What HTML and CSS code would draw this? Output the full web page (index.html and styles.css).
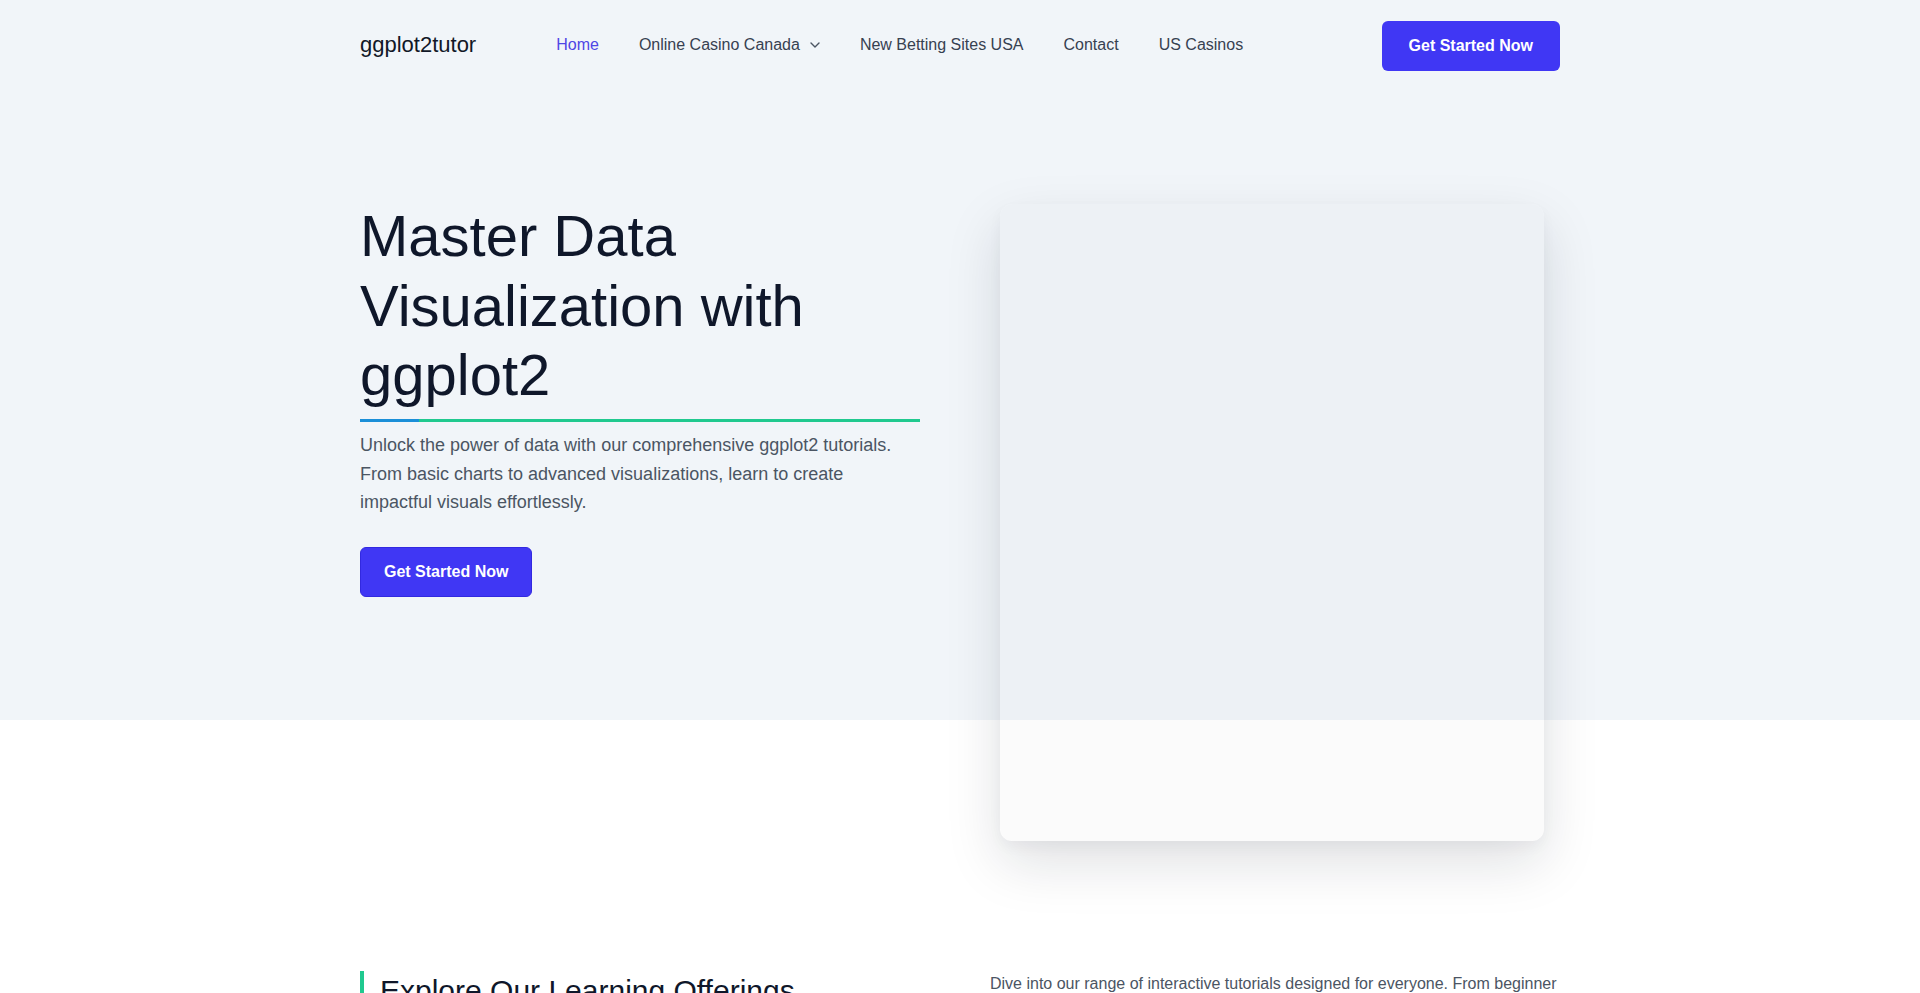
FILE: index.html
```html
<!DOCTYPE html>
<html lang="en">
<head>
<meta charset="utf-8">
<title>ggplot2tutor - Master Data Visualization with ggplot2</title>
<link rel="stylesheet" href="styles.css">
</head>
<body>
<div class="top">
  <header class="container header">
    <a class="logo" href="#">ggplot2tutor</a>
    <nav class="nav">
      <a class="nav-link active" href="#">Home</a>
      <a class="nav-link has-menu" href="#">Online Casino Canada
        <svg class="chevron" width="10" height="6" viewBox="0 0 10 6" aria-hidden="true"><path d="M1 1l4 4 4-4" fill="none" stroke="currentColor" stroke-width="1.4" stroke-linecap="round" stroke-linejoin="round"/></svg>
      </a>
      <a class="nav-link" href="#">New Betting Sites USA</a>
      <a class="nav-link" href="#">Contact</a>
      <a class="nav-link" href="#">US Casinos</a>
    </nav>
    <a class="btn btn-nav" href="#">Get Started Now</a>
  </header>

  <section class="container hero">
    <div class="hero-text">
      <h1 class="hero-title">Master Data Visualization with ggplot2</h1>
      <p class="hero-lead">Unlock the power of data with our comprehensive ggplot2 tutorials. From basic charts to advanced visualizations, learn to create impactful visuals effortlessly.</p>
      <a class="btn btn-hero" href="#">Get Started Now</a>
    </div>
    <div class="hero-media">
      <div class="hero-card"></div>
    </div>
  </section>
</div>

<section class="container offerings">
  <h2 class="section-title">Explore Our Learning Offerings</h2>
  <p class="section-text">Dive into our range of interactive tutorials designed for everyone. From beginner basics to advanced techniques, discover step-by-step lessons that help you build beautiful, insightful charts with ggplot2.</p>
</section>
</body>
</html>
```
FILE: styles.css
```css
html {
  scrollbar-width: none;
}

body {
  margin: 0;
  font-family: "Liberation Sans", Arial, Helvetica, sans-serif;
  color: #111827;
  background: #ffffff;
}

a {
  text-decoration: none;
}

.container {
  width: 1200px;
  margin: 0 auto;
}

.top {
  background: #f1f5f9;
}

/* Header */
.header {
  display: flex;
  align-items: center;
  padding: 21px 0;
}

.logo {
  font-size: 22px;
  color: #111827;
  margin-bottom: 3px;
}

.nav {
  display: flex;
  align-items: center;
  gap: 40px;
  margin-left: 80px;
  margin-bottom: 3px;
}

.nav-link {
  font-size: 16px;
  color: #374151;
  display: flex;
  align-items: center;
}

.nav-link.active {
  color: #4f46e5;
}

.chevron {
  margin-left: 10px;
  color: #4b5563;
}

.btn {
  display: inline-block;
  background: #4037f4;
  color: #ffffff;
  font-weight: 700;
  font-size: 16px;
  line-height: 18px;
  border-radius: 6px;
}

.btn-nav {
  margin-left: auto;
  padding: 16px 27px;
}

/* Hero */
.hero {
  display: grid;
  grid-template-columns: 560px 560px;
  column-gap: 80px;
  align-items: start;
  box-sizing: border-box;
  height: 628px;
  padding-top: 109px;
}

.hero-title {
  margin: 0;
  font-size: 58px;
  font-weight: 400;
  line-height: 1.2;
  color: #0f172a;
  padding-bottom: 9px;
  border-bottom: 3px solid #20c98f;
  border-image: linear-gradient(to right, #1b8fd8 60px, #20c98f 60px) 1;
}

.hero-lead {
  margin: 9px 0 30px;
  max-width: 540px;
  font-size: 18px;
  line-height: 1.6;
  color: #4b5563;
}

.btn-hero {
  padding: 15px 23px;
  border: 1px solid #3229e0;
}

.hero-media {
  padding-top: 3px;
}

.hero-card {
  width: 544px;
  height: 637px;
  border-radius: 12px;
  background: rgba(0, 0, 0, 0.016);
  box-shadow: 0 22px 55px rgba(15, 23, 42, 0.13), 0 6px 14px rgba(15, 23, 42, 0.04);
}

/* Offerings */
.offerings {
  display: grid;
  grid-template-columns: 1fr 1fr;
  column-gap: 60px;
  padding-top: 251px;
  padding-bottom: 80px;
}

.section-title {
  margin: 0;
  font-size: 30px;
  font-weight: 400;
  line-height: 1.3;
  color: #0f172a;
  border-left: 4px solid #20c98f;
  padding-left: 16px;
  align-self: start;
}

.section-text {
  margin: 0;
  font-size: 16px;
  line-height: 1.6;
  color: #4b5563;
}
```
